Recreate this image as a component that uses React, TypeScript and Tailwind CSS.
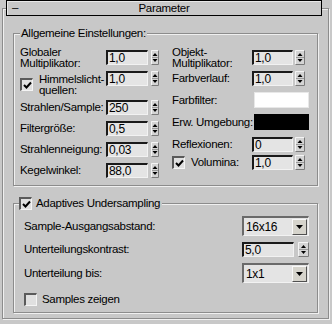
const font = "font-['Liberation_Sans',Arial,sans-serif]";

const SpinBtn = ({ w }: { w: number }) => (
  <svg width={w} height="15" className="block shrink-0">
    <rect x="0" y="0" width={w} height="15" fill="#d4d4d4" />
    <path d={`M0.5 14.5V0.5H${w - 0.5}`} stroke="#f4f4f4" fill="none" />
    <path d={`M0.5 14.5H${w - 0.5}V0.5`} stroke="#7a7a7a" fill="none" />
    <path d={`M1 7.5H${w - 1}`} stroke="#9a9a9a" />
    <path d={`M${w / 2} 3L${w / 2 + 2.5} 6H${w / 2 - 2.5}Z`} fill="#000" />
    <path d={`M${w / 2} 12L${w / 2 + 2.5} 9H${w / 2 - 2.5}Z`} fill="#000" />
  </svg>
);

const Field = ({ value, className }: { value: string; className: string }) => (
  <div
    className={`h-[15px] shrink-0 bg-[#e4e4e4] border-t-2 border-l-2 border-t-[#1a1a1a] border-l-[#1a1a1a] border-b border-r border-b-[#f2f2f2] border-r-[#f2f2f2] pl-[1px] text-[12px] leading-[12px] text-black ${className}`}
  >
    {value}
  </div>
);

const Check = ({ checked }: { checked?: boolean }) => (
  <div className="w-[13px] h-[13px] shrink-0 bg-[#e0e0e0] border-t-2 border-l-2 border-t-[#5a5a5a] border-l-[#5a5a5a] border-b border-r border-b-[#f4f4f4] border-r-[#f4f4f4] flex items-center justify-center">
    {checked && (
      <svg width="9" height="9" viewBox="0 0 9 9" className="block">
        <path d="M1 4L3.5 6.5L8 1.5" stroke="#000" strokeWidth="2" fill="none" />
      </svg>
    )}
  </div>
);

const Dropdown = ({ value }: { value: string }) => (
  <div className="w-[67px] h-[20px] bg-[#e4e4e4] border-t-2 border-l-2 border-t-[#6a6a6a] border-l-[#6a6a6a] border-b border-r border-b-[#f2f2f2] border-r-[#f2f2f2] flex items-center justify-between pl-[2px] pr-[1px]">
    <span className="text-[12px] leading-[12px]">{value}</span>
    <div className="w-[15px] h-[16px] bg-[#d6d4cc] border-t border-l border-t-[#f8f8f8] border-l-[#f8f8f8] border-b border-r border-b-[#505050] border-r-[#505050] flex items-center justify-center">
      <svg width="7" height="4" className="block">
        <path d="M0 0H7L3.5 4Z" fill="#000" />
      </svg>
    </div>
  </div>
);

const Etched = "border border-[#8c8c8c] shadow-[inset_1px_1px_0_#f0f0f0,1px_1px_0_#f0f0f0]";

export default function App() {
  return (
    <div className={`w-[332px] h-[324px] bg-[#c8c8c8] pt-[8px] px-[2px] text-[11.5px] tracking-[-0.3px] text-black ${font}`}>
      <div className={`relative h-[311px] w-[327px] ${Etched}`}>
        {/* rollout title */}
        <div className="absolute left-[3px] -top-[9px] w-[316px] h-[16px] bg-[#c8c8c8] border border-black shadow-[inset_1px_1px_0_#e8e8e8] flex items-center">
          <span className="absolute left-[5px] top-0 leading-[13px]">–</span>
          <span className="w-full text-center leading-[13px]">Parameter</span>
        </div>

        {/* Allgemeine Einstellungen */}
        <div className={`relative ml-[10px] mt-[24px] w-[305px] h-[153px] ${Etched}`}>
          <span className="absolute left-[6px] -top-[8px] bg-[#c8c8c8] px-[1px] leading-[14px]">
            Allgemeine Einstellungen:
          </span>
          <div className="flex pl-[6px]">
            <div className="w-[152px] flex flex-col">
              <div className="mt-[16px] h-[15px] flex items-center">
                <div className="w-[86px] leading-[11px]">Globaler<br />Multiplikator:</div>
                <Field value="1,0" className="w-[42px]" />
                <div className="ml-[3px]"><SpinBtn w={8} /></div>
              </div>
              <div className="mt-[6px] h-[15px] flex items-start">
                <div className="w-[86px] h-[27px] flex items-center">
                  <Check checked />
                  <div className="ml-[6px] leading-[11px] pt-[1px]">Himmelslicht-<br />quellen:</div>
                </div>
                <Field value="1,0" className="w-[42px]" />
                <div className="ml-[3px]"><SpinBtn w={8} /></div>
              </div>
              {[
                ["Strahlen/Sample:", "250"],
                ["Filtergröße:", "0,5"],
                ["Strahlenneigung:", "0,03"],
                ["Kegelwinkel:", "88,0"],
              ].map(([l, v], i) => (
                <div key={l} className={`h-[15px] flex items-center ${i === 0 ? "mt-[14px]" : "mt-[6px]"}`}>
                  <div className="w-[86px] leading-[13px] whitespace-nowrap">{l}</div>
                  <Field value={v} className="w-[42px]" />
                  <div className="ml-[3px]"><SpinBtn w={8} /></div>
                </div>
              ))}
            </div>

            <div className="flex flex-col">
              <div className="mt-[16px] h-[15px] flex items-center">
                <div className="w-[80px] leading-[11px]">Objekt-<br />Multiplikator:</div>
                <Field value="1,0" className="w-[41px]" />
                <div className="ml-[2px]"><SpinBtn w={10} /></div>
              </div>
              <div className="mt-[6px] h-[15px] flex items-center">
                <div className="w-[80px] leading-[13px]">Farbverlauf:</div>
                <Field value="1,0" className="w-[41px]" />
                <div className="ml-[2px]"><SpinBtn w={10} /></div>
              </div>
              <div className="mt-[6px] h-[16px] flex items-center">
                <div className="w-[82px] leading-[13px]">Farbfilter:</div>
                <div className="w-[55px] h-[16px] bg-white border border-[#e8e8e8]" />
              </div>
              <div className="mt-[6px] h-[16px] flex items-center">
                <div className="w-[82px] leading-[13px] whitespace-nowrap">Erw. Umgebung:</div>
                <div className="w-[55px] h-[16px] bg-black" />
              </div>
              <div className="mt-[7px] h-[15px] flex items-center">
                <div className="w-[80px] leading-[13px]">Reflexionen:</div>
                <Field value="0" className="w-[41px]" />
                <div className="ml-[2px]"><SpinBtn w={10} /></div>
              </div>
              <div className="mt-[3px] h-[15px] flex items-center">
                <div className="w-[80px] flex items-center">
                  <Check checked />
                  <span className="ml-[6px] leading-[13px]">Volumina:</span>
                </div>
                <Field value="1,0" className="w-[41px]" />
                <div className="ml-[2px]"><SpinBtn w={10} /></div>
              </div>
            </div>
          </div>
        </div>

        {/* Adaptives Undersampling */}
        <div className={`relative ml-[10px] mt-[17px] w-[305px] h-[110px] ${Etched}`}>
          <div className="absolute left-[5px] -top-[7px] bg-[#c8c8c8] pr-[2px] flex items-center">
            <Check checked />
            <span className="ml-[4px] leading-[13px]">Adaptives Undersampling</span>
          </div>
          <div className="flex flex-col pl-[10px]">
            <div className="mt-[12px] h-[20px] flex items-center">
              <div className="w-[218px] leading-[13px]">Sample-Ausgangsabstand:</div>
              <Dropdown value="16x16" />
            </div>
            <div className="mt-[6px] h-[15px] flex items-center">
              <div className="w-[218px] leading-[13px]">Unterteilungskontrast:</div>
              <Field value="5,0" className="w-[52px]" />
              <div className="ml-[4px]"><SpinBtn w={11} /></div>
            </div>
            <div className="mt-[6px] h-[20px] flex items-center">
              <div className="w-[218px] leading-[13px]">Unterteilung bis:</div>
              <Dropdown value="1x1" />
            </div>
            <div className="mt-[10px] h-[13px] flex items-center">
              <Check />
              <span className="ml-[5px] leading-[13px]">Samples zeigen</span>
            </div>
          </div>
        </div>
      </div>
    </div>
  );
}
